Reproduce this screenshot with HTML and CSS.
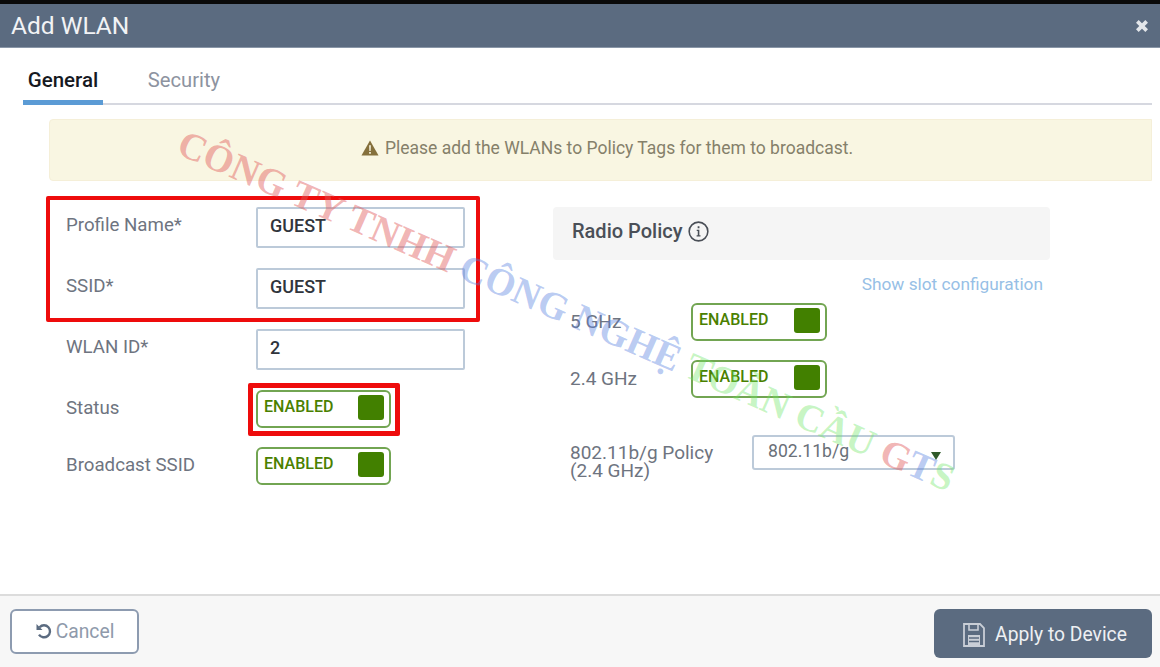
FILE: index.html
```html
<!DOCTYPE html>
<html lang="en">
<head>
    <meta charset="UTF-8">
    <title>Add WLAN</title>
    <link rel="stylesheet" href="styles.css">
</head>
<body>
    <div class="modal">
        <div class="modal-header">
            <span class="modal-title">Add WLAN</span>
            <svg class="close" viewBox="0 0 12 12" width="14" height="14"><path d="M2 2l8 8M10 2l-8 8" stroke="#e3e6ea" stroke-width="3.2" fill="none"/></svg>
        </div>
        <div class="modal-body">
            <div class="tabs">
                <span class="tab active">General</span>
                <span class="tab">Security</span>
            </div>
            <div class="banner">
                <svg viewBox="0 0 16 15" width="18" height="16"><path d="M8 .5L16 14.5H0Z" fill="#85703c"/><path d="M7.2 5h1.6l-.2 5.4H7.4zM7.2 11.3h1.6v1.6H7.2z" fill="#faf6e2"/></svg>
                <span>Please add the WLANs to Policy Tags for them to broadcast.</span>
            </div>
            <div class="form">
                <div class="col-left">
                    <div class="group-marked">
                        <div class="row row-first">
                            <label>Profile Name*</label>
                            <div class="input">GUEST</div>
                        </div>
                        <div class="row row-ssid">
                            <label>SSID*</label>
                            <div class="input">GUEST</div>
                        </div>
                    </div>
                    <div class="row row-id">
                        <label>WLAN ID*</label>
                        <div class="input">2</div>
                    </div>
                    <div class="row row-status">
                        <label>Status</label>
                        <div class="toggle marked"><span>ENABLED</span><i></i></div>
                    </div>
                    <div class="row row-broadcast">
                        <label>Broadcast SSID</label>
                        <div class="toggle"><span>ENABLED</span><i></i></div>
                    </div>
                </div>
                <div class="col-right">
                    <div class="panel-title">
                        <span>Radio Policy</span>
                        <svg viewBox="0 0 20 20" width="21" height="21"><circle cx="10" cy="10" r="8.9" fill="none" stroke="#4a4f57" stroke-width="1.5"/><path d="M8.3 8.4h2.5v5.2h1.1v1.1H8.2v-1.1h1.1V9.5h-1zM9.2 5h1.7v1.8H9.2z" fill="#4a4f57"/></svg>
                    </div>
                    <a class="slot-link">Show slot configuration</a>
                    <div class="radio-row radio-5">
                        <label>5 GHz</label>
                        <div class="toggle"><span>ENABLED</span><i></i></div>
                    </div>
                    <div class="radio-row radio-24">
                        <label>2.4 GHz</label>
                        <div class="toggle"><span>ENABLED</span><i></i></div>
                    </div>
                    <div class="radio-row radio-policy">
                        <label>802.11b/g Policy<br>(2.4 GHz)</label>
                        <div class="select">802.11b/g<b></b></div>
                    </div>
                </div>
            </div>
        </div>
        <div class="modal-footer">
            <button class="btn btn-cancel">
                <svg viewBox="0 0 18 18" width="18" height="18"><path d="M4.6 5.2A6 6 0 1 1 4 12.6" fill="none" stroke="#5b6b80" stroke-width="2.4"/><path d="M1.5 2v6h6z" fill="#5b6b80"/></svg>
                Cancel
            </button>
            <button class="btn btn-apply">
                <svg viewBox="0 0 22 24" width="22" height="24"><path d="M1 1h16l4 4v18H1z" fill="none" stroke="#c9ced6" stroke-width="1.8"/><path d="M6 1v6h9V1" fill="none" stroke="#c9ced6" stroke-width="1.6"/><path d="M5 12h12v10H5z" fill="#c9ced6"/><path d="M6 15h10M6 18.500h10" stroke="#5b6b80" stroke-width="1.300"/></svg>
                Apply to Device
            </button>
        </div>
        <div class="watermark"><span class="wm-red">CÔNG TY TNHH </span><span class="wm-blue">CÔNG NGHỆ </span><span class="wm-green">TOÀN CẦU </span><span class="wm-red">G</span><span class="wm-blue">T</span><span class="wm-green">S</span></div>
    </div>
</body>
</html>
```

FILE: styles.css
```css
html, body {
    margin: 0;
    height: 100%;
    background: #0a0a0a;
}

body {
    font-family: "Roboto", "Liberation Sans", sans-serif;
    overflow: hidden;
}

.modal {
    position: relative;
    width: 1160px;
    height: 663px;
    margin-top: 4px;
    display: flex;
    flex-direction: column;
    overflow: hidden;
    background: #fff;
}

.modal-header {
    height: 44px;
    flex: none;
    box-sizing: border-box;
    padding: 0 11px 0 11px;
    display: flex;
    align-items: center;
    justify-content: space-between;
    background: #5b6b80;
    border-bottom: 1px solid #8a97a8;
}

.modal-title {
    color: #f2f3f5;
    font-size: 24.5px;
}

.modal-body {
    flex: 1;
    min-height: 0;
}

.tabs {
    height: 57px;
    box-sizing: border-box;
    margin: 0 8px 0 23px;
    display: flex;
    border-bottom: 2px solid #d6d8e0;
}

.tab {
    box-sizing: border-box;
    height: 57px;
    width: 80px;
    margin-right: 41px;
    padding-top: 20px;
    text-align: center;
    font-size: 20.2px;
    color: #8d93a0;
}

.tab.active {
    color: #16191f;
    font-size: 20.5px;
    font-weight: 500;
    border-bottom: 5px solid #5b9bd5;
    border-radius: 3px 3px 0 0;
}

.banner {
    height: 62px;
    box-sizing: border-box;
    margin: 14px 8px 0 49px;
    padding: 0 0 5px 13px;
    display: flex;
    align-items: center;
    justify-content: center;
    gap: 6px;
    background: #f9f6e2;
    border: 1px solid #f5efd8;
    border-radius: 4px 0 0 4px;
    color: #85806a;
    font-size: 17.5px;
}

.form {
    display: flex;
    padding: 26px 0 0 66px;
}

.col-left {
    width: 487px;
    flex: none;
}

.group-marked {
    width: 399px;
    margin: -11px -15px -13px -20px;
    padding: 7px 11px 9px 16px;
    border: 4px solid #ee0c0c;
    border-radius: 2px;
}

.row {
    display: flex;
    width: 399px;
}

.row label {
    width: 190px;
    flex: none;
    color: #6e7480;
    font-size: 18.7px;
    line-height: 36px;
}

.row-ssid, .row-id {
    margin-top: 20px;
}

.row-status {
    margin-top: 20px;
}

.row-broadcast {
    margin-top: 19px;
}

.input {
    box-sizing: border-box;
    width: 209px;
    height: 41px;
    padding-left: 12px;
    line-height: 33px;
    border: 2px solid #bccad9;
    border-radius: 2px;
    color: #30353c;
    font-size: 18px;
    font-weight: 500;
}

.toggle {
    position: relative;
    box-sizing: border-box;
    width: 135px;
    height: 38px;
    padding: 0 5px 0 6px;
    display: flex;
    align-items: center;
    justify-content: space-between;
    background: #fff;
    border: 2px solid #72a552;
    border-radius: 6px;
}

.toggle span {
    color: #4a8000;
    font-size: 16px;
    font-weight: 500;
    margin-top: -6px;
}

.toggle i {
    width: 26px;
    height: 25px;
    margin-top: -3px;
    background: #428000;
    border-radius: 3px;
}

.toggle.marked::after {
    content: "";
    position: absolute;
    top: -9px;
    left: -10px;
    right: -11px;
    bottom: -10px;
    border: 5px solid #ee0c0c;
    border-radius: 2px;
}

.col-right {
    width: 497px;
    flex: none;
}

.col-right .toggle {
    width: 136px;
}

.panel-title {
    height: 53px;
    box-sizing: border-box;
    padding: 0 0 5px 19px;
    display: flex;
    align-items: center;
    gap: 6px;
    background: #f5f5f5;
    border-radius: 4px;
    color: #4a4f57;
    font-size: 20px;
    font-weight: 500;
}

.slot-link {
    display: block;
    margin-top: 13px;
    padding-right: 7px;
    text-align: right;
    color: #97bfe6;
    font-size: 17.3px;
    line-height: 22px;
}

.radio-row {
    display: flex;
    padding-left: 17px;
}

.radio-row label {
    color: #6e7480;
    font-size: 19px;
}

.radio-5, .radio-24 {
    margin-top: 8px;
}

.radio-24 {
    margin-top: 19px;
}

.radio-5 label, .radio-24 label {
    width: 121px;
    line-height: 38px;
}

.radio-policy {
    margin-top: 37px;
}

.radio-policy label {
    width: 182px;
    padding-top: 9px;
    line-height: 18px;
}

.select {
    position: relative;
    box-sizing: border-box;
    width: 203px;
    height: 35px;
    padding-left: 14px;
    line-height: 29px;
    border: 2px solid #bccad9;
    border-radius: 3px;
    color: #6a7078;
    font-size: 17.6px;
}

.select b {
    position: absolute;
    right: 12px;
    top: 15px;
    border-left: 5px solid transparent;
    border-right: 5px solid transparent;
    border-top: 8px solid #2f5a2a;
}

.modal-footer {
    height: 73px;
    flex: none;
    box-sizing: border-box;
    padding: 13px 8px 0 10px;
    display: flex;
    justify-content: space-between;
    align-items: flex-start;
    background: #f7f7f7;
    border-top: 2px solid #dcdcdc;
}

.btn {
    box-sizing: border-box;
    display: flex;
    align-items: center;
    justify-content: center;
    font-family: inherit;
    font-size: 19.3px;
}

.btn-cancel {
    width: 129px;
    height: 45px;
    gap: 3px;
    padding-bottom: 2px;
    background: #fff;
    border: 2px solid #8d9bb0;
    border-radius: 6px;
    color: #8f9aab;
}

.btn-apply {
    width: 218px;
    height: 49px;
    gap: 10px;
    padding: 2px 0 0 4px;
    background: #5b6b80;
    border: none;
    border-radius: 6px;
    color: #eef0f3;
}

.watermark {
    position: absolute;
    left: 189px;
    top: 117px;
    white-space: pre;
    font-family: "Liberation Serif", serif;
    font-size: 38.4px;
    font-weight: 700;
    line-height: 44px;
    transform-origin: 0 0;
    transform: rotate(23.7deg);
    pointer-events: none;
}

.wm-red {
    color: rgba(224, 90, 90, 0.45);
}

.wm-blue {
    color: rgba(90, 130, 225, 0.42);
}

.wm-green {
    color: rgba(110, 230, 100, 0.4);
}
```
